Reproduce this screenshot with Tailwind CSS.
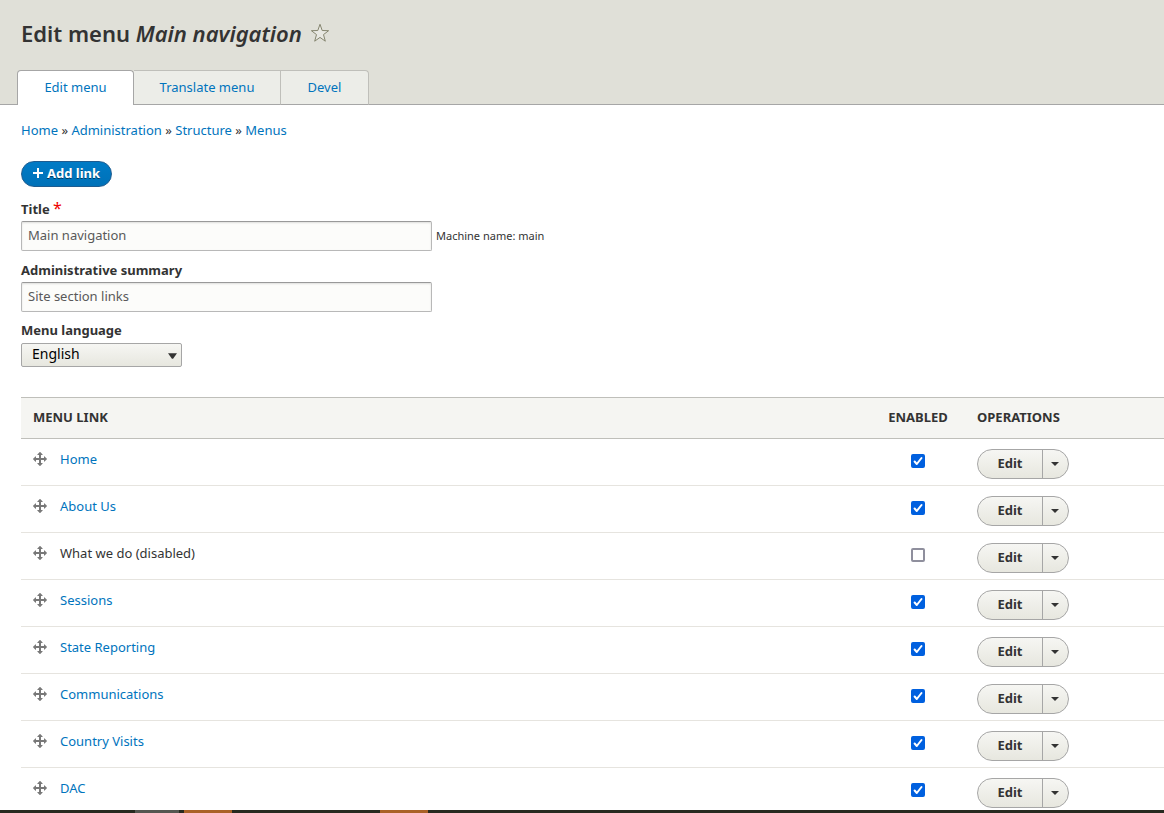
<!DOCTYPE html>
<html lang="en">
<head>
<meta charset="utf-8">
<meta name="viewport" content="width=device-width, initial-scale=1">
<title>Edit menu Main navigation</title>
<script src="https://cdn.jsdelivr.net/npm/@tailwindcss/browser@4"></script>
</head>
<body class="flex h-screen flex-col overflow-hidden bg-white font-['Noto_Sans','Open_Sans',sans-serif] text-[13px] leading-5 text-[#333]">
<svg class="hidden" aria-hidden="true">
  <symbol id="move" viewBox="0 0 16 16"><path fill="#787878" d="M14.904 7.753l-2.373-2.372c-.291-.292-.529-.193-.529.22v1.399h-3v-3h1.398c.414 0 .512-.239.221-.53l-2.371-2.372c-.137-.136-.36-.136-.497 0l-2.372 2.372c-.292.292-.193.530.22.530h1.399v3h-3v-1.369c0-.413-.239-.511-.53-.220l-2.372 2.372c-.136.136-.136.359 0 .494l2.372 2.372c.291.292.530.192.530-.219v-1.430h3v3h-1.430c-.413 0-.511.237-.220.529l2.374 2.373c.137.137.360.137.495 0l2.373-2.373c.290-.291.190-.529-.222-.529h-1.370v-3h3v1.400c0 .412.238.511.529.219l2.373-2.371c.137-.137.137-.359.002-.496z"/></symbol>
  <symbol id="tick" viewBox="0 0 14 14"><path fill="none" stroke="#fff" stroke-width="2" stroke-linecap="round" stroke-linejoin="round" d="M3.600 7.500 5.800 10 10.500 4"/></symbol>
  <symbol id="caret" viewBox="0 0 8 4"><path fill="#333" d="M0 0h8L4 4z"/></symbol>
</svg>

<header class="shrink-0 border-b border-[#a6a6a6] bg-[#e0e0d8] pt-[19px]">
  <div class="flex items-center gap-2 px-[21px]">
    <h1 class="text-[22px] leading-7 font-semibold">Edit menu <em>Main navigation</em></h1>
    <button type="button" aria-label="Add to shortcuts">
      <svg class="size-5" viewBox="0 0 20 20" fill="#e8e8e2" stroke="#85856f" stroke-width="1"><path d="M10 1.300 12.200 7.500 18.600 7.700 13.500 11.600 15.300 18.200 10 14.400 4.700 18.200 6.500 11.600 1.400 7.700 7.800 7.500Z"/></svg>
    </button>
  </div>
  <nav class="-mb-px mt-[23px] flex pl-[17px] text-center leading-[33px] text-[#0074bd]" aria-label="Tabs">
    <a href="#" class="w-[117px] rounded-t border border-b-0 border-[#a6a6a6] bg-white" aria-current="page">Edit menu</a>
    <a href="#" class="w-[147px] border-y border-r border-t-[#bfbfba] border-r-[#bfbfba] border-b-[#a6a6a6] bg-[#ecede8]">Translate menu</a>
    <a href="#" class="w-[88px] rounded-tr border-y border-r border-t-[#bfbfba] border-r-[#bfbfba] border-b-[#a6a6a6] bg-[#ecede8]">Devel</a>
  </nav>
</header>

<main class="min-h-0 flex-1 overflow-hidden pl-[21px]">
  <nav class="mt-[15px]" aria-label="Breadcrumb">
    <a href="#" class="text-[#0074bd]">Home</a> » <a href="#" class="text-[#0074bd]">Administration</a> » <a href="#" class="text-[#0074bd]">Structure</a> » <a href="#" class="text-[#0074bd]">Menus</a>
  </nav>
  <a href="#" class="mt-[21px] flex h-[26px] w-fit items-center gap-1 rounded-full border border-[#1e5c90] bg-linear-to-b from-[#007bc6] to-[#0071b8] px-[11px] pb-[2px] font-bold text-white text-shadow-[0_1px_0_rgba(0,0,0,0.5)]">
    <svg class="size-[10px]" viewBox="0 0 10 10" fill="none" stroke="#fff" stroke-width="2" aria-hidden="true"><path d="M5 0v10M0 5h10"/></svg>Add link
  </a>

  <form>
    <div class="mt-3">
      <label for="title" class="block font-bold">Title <span class="text-base leading-none font-normal text-[#e00]">*</span></label>
      <div class="mt-[2px] flex items-center gap-1">
        <input id="title" type="text" value="Main navigation" required class="h-[30px] w-[411px] rounded-xs border border-[#b8b8b8] border-t-[#999] bg-[#fcfcfa] px-[6px] pb-[2px] text-[#595959] shadow-[inset_0_1px_2px_rgba(0,0,0,0.12)]">
        <span class="text-[11px]">Machine name: main</span>
      </div>
    </div>
    <div class="mt-[9px]">
      <label for="summary" class="block font-bold">Administrative summary</label>
      <input id="summary" type="text" value="Site section links" class="mt-[2px] block h-[30px] w-[411px] rounded-xs border border-[#b8b8b8] border-t-[#999] bg-[#fcfcfa] px-[6px] pb-[2px] text-[#595959] shadow-[inset_0_1px_2px_rgba(0,0,0,0.12)]">
    </div>
    <div class="mt-2">
      <label for="language" class="block font-bold">Menu language</label>
      <div class="relative mt-[3px] w-[161px]">
        <select id="language" class="block h-6 w-full appearance-none rounded-xs border border-[#a6a6a6] bg-linear-to-b from-[#f6f6f3] to-[#e7e7df] pb-[2px] pl-[10px] text-sm leading-5 text-black"><option>English</option></select>
        <svg class="pointer-events-none absolute top-[10px] right-[5px] h-[6px] w-[9px]" viewBox="0 0 8 5" aria-hidden="true"><path fill="#333" d="M0 0h8L4.500 5h-1z"/></svg>
      </div>
    </div>

    <table class="mt-[30px] w-full table-fixed border-separate border-spacing-0">
      <thead>
        <tr class="h-[42px] bg-[#f5f5f2] text-left text-[13px] font-semibold uppercase">
          <th scope="col" class="border-y border-[#bfbfba] pb-[2px] pl-3">Menu link</th>
          <th scope="col" class="w-[94px] border-y border-[#bfbfba] pb-[2px] text-center">Enabled</th>
          <th scope="col" class="w-[199px] border-y border-[#bfbfba] pb-[2px] pl-3">Operations</th>
        </tr>
      </thead>
      <tbody id="links"></tbody>
    </table>
  </form>
</main>

<footer class="flex h-[3px] shrink-0 bg-[#272a20]">
  <div class="ml-[135px] w-[44px] bg-[#555751]"></div>
  <div class="ml-[5px] w-12 bg-[#aa6127]"></div>
  <div class="ml-[148px] w-12 bg-[#aa6127]"></div>
</footer>

<script>
const links = ['Home', 'About Us', 'What we do', 'Sessions', 'State Reporting', 'Communications', 'Country Visits', 'DAC'];
document.getElementById('links').innerHTML = links.map((name, i) => {
  const enabled = name !== 'What we do';
  return `<tr class="h-[47px] align-top">
    <td class="border-b border-[#e6e4df] pt-[10px] pl-[11px]">
      <div class="flex items-center gap-3">
        <button type="button" class="block" aria-label="Move ${name}"><svg class="size-4"><use href="#move"/></svg></button>
        ${enabled ? `<a href="#" class="text-[#0074bd]">${name}</a>` : `<span>${name} (disabled)</span>`}
      </div>
    </td>
    <td class="border-b border-[#e6e4df] pt-[15px]">
      <div class="relative mx-auto size-[14px]">
        <input type="checkbox" aria-label="Enable ${name}" ${enabled ? 'checked' : ''} class="peer block size-full appearance-none rounded-xs border-2 border-[#8f8f9d] bg-white checked:border-[#0060df] checked:bg-[#0060df]">
        <svg class="pointer-events-none invisible absolute inset-0 size-full peer-checked:visible"><use href="#tick"/></svg>
      </div>
    </td>
    <td class="border-b border-[#e6e4df] pt-[10px] pl-3">
      <div class="flex h-[30px] w-[92px] overflow-hidden rounded-full border border-[#a6a6a6] bg-linear-to-b from-[#f6f6f3] to-[#e7e7df]">
        <button type="button" class="flex-1 pb-[2px] font-bold">Edit</button>
        <button type="button" class="flex w-[26px] items-center justify-center border-l border-[#a6a6a6] pr-[2px]" aria-label="More operations for ${name}"><svg class="h-1 w-2"><use href="#caret"/></svg></button>
      </div>
    </td>
  </tr>`;
}).join('');
</script>
</body>
</html>
